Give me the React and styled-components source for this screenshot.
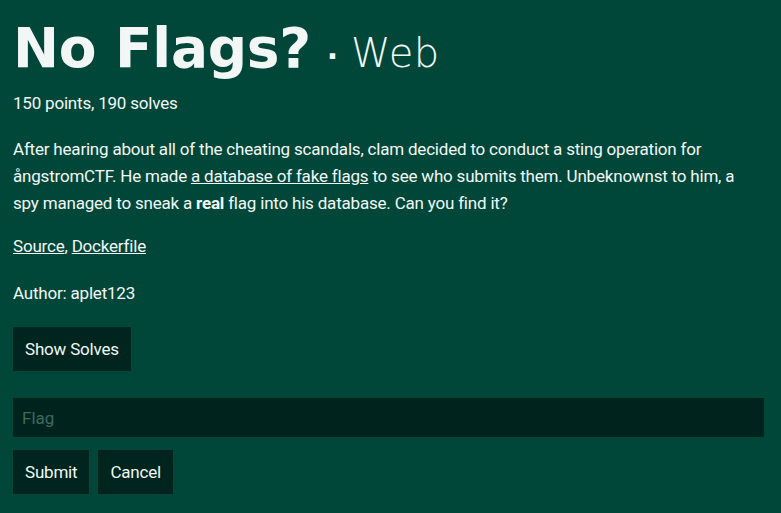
import React from "react";
import styled, { createGlobalStyle } from "styled-components";

const GlobalStyle = createGlobalStyle`
  html, body {
    margin: 0;
    background: #00473a;
  }
  body {
    font-family: "Roboto", "Liberation Sans", sans-serif;
    color: #f2f7f5;
  }
`;

const Page = styled.div`
  width: 781px;
  height: 513px;
  padding: 16px 17px 0 13px;
  box-sizing: border-box;
  background: #00473a;
  letter-spacing: -0.2px;
`;

const Heading = styled.h1`
  margin: 0;
  display: flex;
  align-items: baseline;
  font-family: "DejaVu Sans", sans-serif;
  font-weight: 700;
  font-size: 55px;
  line-height: 64px;
  letter-spacing: -0.3px;
`;

const Dot = styled.span`
  font-family: "DejaVu Sans", sans-serif;
  font-weight: 700;
  font-size: 30px;
  margin: 0 13px 0 16px;
`;

const Category = styled.span`
  font-family: "DejaVu Sans", sans-serif;
  font-weight: 300;
  font-size: 40px;
  letter-spacing: 0.5px;
`;

const Stats = styled.p`
  margin: 2px 0 0;
  font-size: 17px;
  line-height: 24px;
`;

const Description = styled.p`
  margin: 21px 0 0;
  max-width: 745px;
  font-size: 17px;
  line-height: 27px;

  a {
    color: inherit;
    text-decoration: underline;
  }
`;

const Links = styled.p`
  margin: 17px 0 0;
  font-size: 17px;
  line-height: 24px;

  a {
    color: inherit;
  }
`;

const Author = styled.p`
  margin: 23px 0 0;
  font-size: 17px;
  line-height: 24px;
`;

const Button = styled.button`
  height: 44px;
  padding: 0 12px;
  border: 0;
  background: #00251e;
  color: #f2f7f5;
  font-family: inherit;
  font-size: 17px;
  letter-spacing: -0.2px;
  cursor: pointer;
`;

const SolvesRow = styled.div`
  margin-top: 22px;
`;

const FlagInput = styled.input`
  display: block;
  width: 100%;
  height: 39px;
  margin-top: 27px;
  padding: 0 9px;
  box-sizing: border-box;
  border: 0;
  background: #00241d;
  color: #f2f7f5;
  font-family: inherit;
  font-size: 17px;
  outline: none;

  &::placeholder {
    color: #3e6a5f;
  }
`;

const Actions = styled.div`
  display: flex;
  gap: 9px;
  margin-top: 13px;
`;

export default function App() {
  return (
    <Page>
      <GlobalStyle />
      <Heading>
        No Flags?
        <Dot>·</Dot>
        <Category>Web</Category>
      </Heading>
      <Stats>150 points, 190 solves</Stats>
      <Description>
        After hearing about all of the cheating scandals, clam decided to conduct a sting operation for
        ångstromCTF. He made <a href="#">a database of fake flags</a> to see who submits them. Unbeknownst
        to him, a spy managed to sneak a <b>real</b> flag into his database. Can you find it?
      </Description>
      <Links>
        <a href="#">Source</a>, <a href="#">Dockerfile</a>
      </Links>
      <Author>Author: aplet123</Author>
      <SolvesRow>
        <Button>Show Solves</Button>
      </SolvesRow>
      <FlagInput placeholder="Flag" />
      <Actions>
        <Button>Submit</Button>
        <Button>Cancel</Button>
      </Actions>
    </Page>
  );
}
